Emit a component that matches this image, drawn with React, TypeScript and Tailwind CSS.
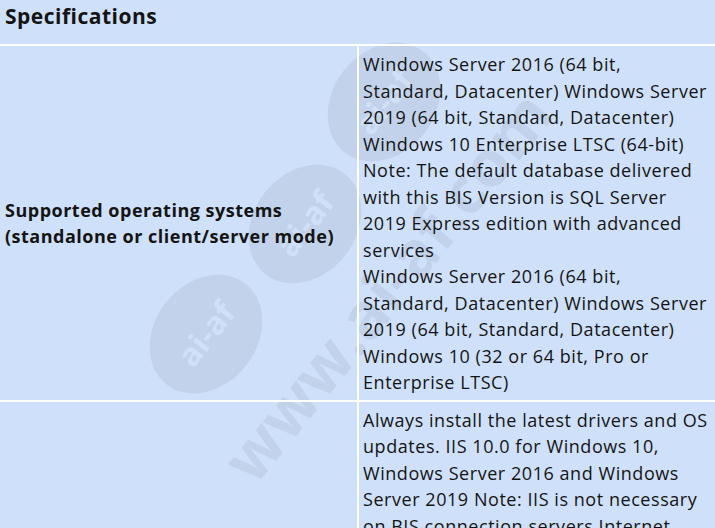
import React from "react";

const font = { fontFamily: '"Open Sans", "Noto Sans", Arial, sans-serif' };

const row1 = [
  "Windows Server 2016 (64 bit,",
  "Standard, Datacenter) Windows Server",
  "2019 (64 bit, Standard, Datacenter)",
  "Windows 10 Enterprise LTSC (64-bit)",
  "Note: The default database delivered",
  "with this BIS Version is SQL Server",
  "2019 Express edition with advanced",
  "services",
  "Windows Server 2016 (64 bit,",
  "Standard, Datacenter) Windows Server",
  "2019 (64 bit, Standard, Datacenter)",
  "Windows 10 (32 or 64 bit, Pro or",
  "Enterprise LTSC)",
];

const row2 = [
  "Always install the latest drivers and OS",
  "updates. IIS 10.0 for Windows 10,",
  "Windows Server 2016 and Windows",
  "Server 2019 Note: IIS is not necessary",
  "on BIS connection servers Internet",
];

function Badge({ cls }: { cls: string }) {
  return (
    <div className={`absolute flex h-[128px] w-[102px] rotate-[38deg] items-center justify-center rounded-[50%] bg-[#c1d2ea] ${cls}`}>
      <span className="-rotate-[90deg] text-[32px] font-bold text-[#d0e0f7]" style={font}>ai-af</span>
    </div>
  );
}

function Watermark() {
  return (
    <div className="pointer-events-none absolute inset-0 overflow-hidden">
      <Badge cls="left-[254px] top-[160px]" />
      <Badge cls="left-[155px] top-[270px]" />
      <Badge cls="left-[333px] top-[38px]" />
      <div
        className="absolute left-[236px] top-[440px] origin-[0%_50%] -rotate-[51deg] whitespace-nowrap text-[64px] font-bold leading-[64px] text-[#c1d2ea]"
        style={font}
      >
        www.ai-af.com
      </div>
    </div>
  );
}

export default function App() {
  return (
    <div className="relative h-[528px] w-[715px] overflow-hidden bg-[#cfe1fa] text-[#141414]" style={font}>
      <Watermark />
      <div className="relative">
        <div className="flex h-[46px] items-center border-b-2 border-white px-[5px] pb-[10px] text-[21px] font-bold tracking-[0.5px]">
          Specifications
        </div>
        <div className="grid grid-cols-[357px_1fr] border-b-2 border-white">
          <div className="flex items-center px-[5px] text-[18px] font-bold leading-[26px] tracking-[0.5px]">
            <div>
              Supported operating systems
              <br />
              (standalone or client/server mode)
            </div>
          </div>
          <div className="border-l-2 border-white pb-[4px] pl-[4px] pt-[5px] text-[18px] leading-[26.5px] tracking-[0.55px]">
            {row1.map((l, i) => (
              <div key={i} className="whitespace-nowrap">{l}</div>
            ))}
          </div>
        </div>
        <div className="grid grid-cols-[357px_1fr]">
          <div />
          <div className="border-l-2 border-white pl-[4px] pt-[5px] text-[18px] leading-[26.5px] tracking-[0.55px]">
            {row2.map((l, i) => (
              <div key={i} className="whitespace-nowrap">{l}</div>
            ))}
          </div>
        </div>
      </div>
    </div>
  );
}
